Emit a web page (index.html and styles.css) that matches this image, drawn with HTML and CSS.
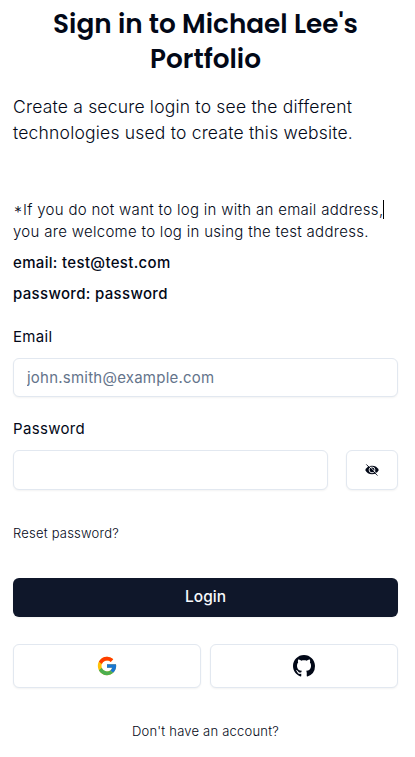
FILE: index.html
```html
<!DOCTYPE html>
<html lang="en">
<head>
<meta charset="utf-8">
<title>Sign in</title>
<link rel="stylesheet" href="styles.css">
</head>
<body>
<main class="page">
  <h1 class="title">Sign in to Michael Lee's<br>Portfolio</h1>
  <p class="intro">Create a secure login to see the different<br>technologies used to create this website.</p>
  <div class="note">
    <p class="note-text"><span class="star">*</span>If you do not want to log in with an email address,<span class="caret"></span><br>you are welcome to log in using the test address.</p>
    <p class="cred email-cred">email: test@test.com</p>
    <p class="cred pass-cred">password: password</p>
  </div>
  <form class="form">
    <label class="label" for="email">Email</label>
    <input class="input" id="email" type="email" placeholder="john.smith@example.com">
    <label class="label" for="password">Password</label>
    <div class="password-row">
      <input class="input" id="password" type="password">
      <button class="outline toggle" type="button" aria-label="Show password">
        <svg width="14" height="14" viewBox="0 0 14 14">
          <path fill="#020817" d="M.2 6.900C1.400 4.400 4 2.800 7 2.800s5.600 1.600 6.800 4.100C12.600 9.500 10 11.200 7 11.200S1.400 9.500.2 6.900Z"/>
          <circle cx="7" cy="6.900" r="2.900" fill="#020817" stroke="#fff" stroke-width=".9"/>
          <path d="M2.600 1.300 13 11.700" stroke="#fff" stroke-width=".8"/>
          <path d="M1.300 1.400 12.500 12.600" stroke="#020817" stroke-width=".9"/>
        </svg>
      </button>
    </div>
    <a class="link reset">Reset password?</a>
    <button class="login" type="button">Login</button>
    <div class="social">
      <button class="outline provider" type="button" aria-label="Google">
        <svg width="22" height="22" viewBox="0 0 48 48">
          <path fill="#FFC107" d="M43.611 20.083H42V20H24v8h11.303c-1.649 4.657-6.080 8-11.303 8-6.627 0-12-5.373-12-12s5.373-12 12-12c3.059 0 5.842 1.154 7.961 3.039l5.657-5.657C34.046 6.053 29.268 4 24 4 12.955 4 4 12.955 4 24s8.955 20 20 20 20-8.955 20-20c0-1.341-.138-2.650-.389-3.917z"/>
          <path fill="#FF3D00" d="M6.306 14.691l6.571 4.819C14.655 15.108 18.961 12 24 12c3.059 0 5.842 1.154 7.961 3.039l5.657-5.657C34.046 6.053 29.268 4 24 4 16.318 4 9.656 8.337 6.306 14.691z"/>
          <path fill="#4CAF50" d="M24 44c5.166 0 9.860-1.977 13.409-5.192l-6.190-5.238A11.910 11.910 0 0 1 24 36c-5.202 0-9.619-3.317-11.283-7.946l-6.522 5.025C9.505 39.556 16.227 44 24 44z"/>
          <path fill="#1976D2" d="M43.611 20.083H42V20H24v8h11.303a12.040 12.040 0 0 1-4.087 5.571l6.193 5.238C36.971 39.205 44 34 44 24c0-1.341-.138-2.650-.389-3.917z"/>
        </svg>
      </button>
      <button class="outline provider" type="button" aria-label="GitHub">
        <svg width="22" height="22" viewBox="0 0 16 16">
          <path fill="#020817" d="M8 0C3.580 0 0 3.580 0 8c0 3.540 2.290 6.530 5.470 7.590.4.070.55-.17.55-.38 0-.19-.01-.82-.01-1.490-2.010.37-2.530-.49-2.690-.94-.09-.23-.48-.94-.82-1.130-.28-.15-.68-.52-.01-.53.63-.01 1.080.58 1.230.82.72 1.210 1.870.87 2.330.66.07-.52.28-.87.51-1.070-1.780-.2-3.640-.89-3.640-3.950 0-.87.31-1.590.82-2.150-.08-.2-.36-1.020.08-2.120 0 0 .67-.21 2.200.82.64-.18 1.320-.27 2-.27s1.360.09 2 .27c1.530-1.040 2.200-.82 2.200-.82.44 1.100.16 1.920.08 2.120.51.56.82 1.270.82 2.150 0 3.070-1.870 3.750-3.650 3.950.29.25.54.73.54 1.480 0 1.070-.01 1.930-.01 2.200 0 .21.15.46.55.38A8.010 8.010 0 0 0 16 8c0-4.420-3.580-8-8-8z"/>
        </svg>
      </button>
    </div>
    <a class="link signup">Don't have an account?</a>
  </form>
</main>
</body>
</html>
```
FILE: styles.css
```css
* { box-sizing: border-box; }
body {
  margin: 0;
  background: #fff;
  color: #020817;
  font-family: Inter, sans-serif;
}
.page {
  width: 385px;
  margin-left: 13px;
  padding-top: 6px;
}
p { margin: 0; white-space: nowrap; }
.title {
  margin: 0;
  font: 600 26.300px/35px Poppins, Inter, sans-serif;
  text-align: center;
  white-space: nowrap;
}
.intro {
  margin-top: 18px;
  font-size: 17.500px;
  font-weight: 300;
  line-height: 26px;
  letter-spacing: .2px;
}
.note { margin-top: 53px; }
.note-text {
  font-size: 15px;
  font-weight: 300;
  line-height: 22px;
  letter-spacing: .3px;
}
.star {
  display: inline-block;
  width: 10px;
  height: 22px;
  padding-left: 1px;
  font-size: 16px;
  vertical-align: top;
  line-height: 26px;
}
.caret {
  display: inline-block;
  width: 1px;
  height: 19px;
  margin-right: -1px;
  vertical-align: -4px;
  background: #000;
}
.cred {
  margin-top: 9px;
  font-size: 15px;
  font-weight: 500;
  line-height: 22px;
  letter-spacing: .33px;
}
.form { display: flex; flex-direction: column; margin-top: 21px; }
.label {
  margin-bottom: 10px;
  font-size: 15px;
  font-weight: 400;
  line-height: 22px;
  letter-spacing: .33px;
}
.input {
  width: 100%;
  height: 39px;
  margin: 0 0 21px;
  padding: 0 13px;
  border: 1px solid #e2e8f0;
  border-radius: 6px;
  background: #fff;
  font: 400 15px Inter, sans-serif;
  letter-spacing: .23px;
  box-shadow: 0 1px 2px rgb(0 0 0 / 5%);
}
.input::placeholder { color: #64748b; opacity: 1; }
.password-row { display: flex; gap: 18px; height: 40px; }
.password-row .input { flex: 1; min-width: 0; height: 40px; margin: 0; }
.outline {
  display: flex;
  align-items: center;
  justify-content: center;
  padding: 0;
  border: 1px solid #e2e8f0;
  border-radius: 6px;
  background: #fff;
  box-shadow: 0 1px 2px rgb(0 0 0 / 5%);
}
.toggle { width: 52px; }
.link {
  color: #020817;
  font-size: 13px;
  font-weight: 300;
  line-height: 20px;
  letter-spacing: .21px;
}
.reset { margin-top: 33px; }
.login {
  height: 39px;
  margin-top: 35px;
  padding: 0 0 2px;
  border: 0;
  border-radius: 6px;
  background: #0f172a;
  color: #f8fafc;
  font: 500 15.500px Inter, sans-serif;
  box-shadow: 0 1px 2px rgb(0 0 0 / 5%);
}
.social {
  display: grid;
  grid-template-columns: 1fr 1fr;
  gap: 9px;
  margin-top: 27px;
}
.provider { height: 44px; }
.signup { margin-top: 33px; text-align: center; }
```
